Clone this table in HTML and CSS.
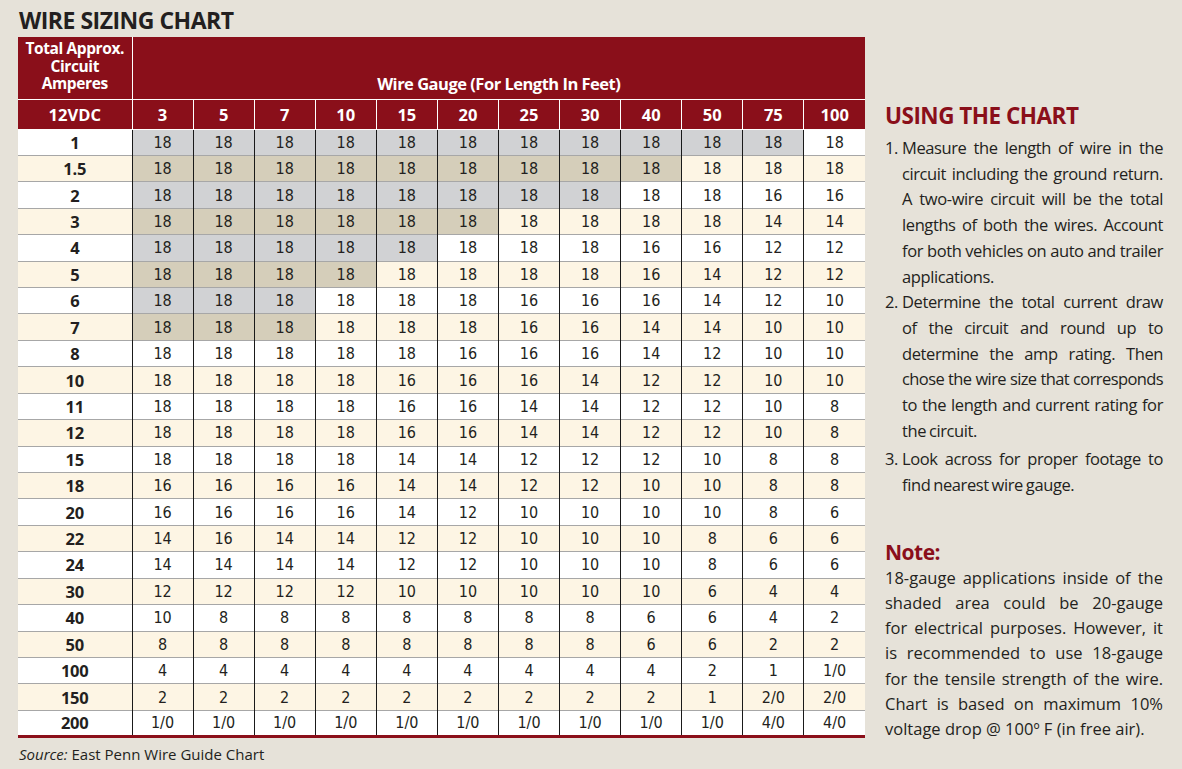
FILE: index.html
```html
<!DOCTYPE html>
<html>
<head>
<meta charset="utf-8">
<link rel="stylesheet" href="styles.css">
</head>
<body>
<div class="page">
  <section class="chart">
    <h1 class="title">WIRE SIZING CHART</h1>
    <table class="grid">
      <colgroup><col class="c0"><col span="12" class="cn"></colgroup>
      <thead>
        <tr class="h1"><th class="amp">Total Approx.<br>Circuit<br>Amperes</th><th colspan="12" class="gauge">Wire Gauge (For Length In Feet)</th></tr>
        <tr class="h2"><th>12VDC</th><th>3</th><th>5</th><th>7</th><th>10</th><th>15</th><th>20</th><th>25</th><th>30</th><th>40</th><th>50</th><th>75</th><th>100</th></tr>
      </thead>
      <tbody>
        <tr><th>1</th><td class="s">18</td><td class="s">18</td><td class="s">18</td><td class="s">18</td><td class="s">18</td><td class="s">18</td><td class="s">18</td><td class="s">18</td><td class="s">18</td><td class="s">18</td><td class="s">18</td><td>18</td></tr>
        <tr><th>1.5</th><td class="s">18</td><td class="s">18</td><td class="s">18</td><td class="s">18</td><td class="s">18</td><td class="s">18</td><td class="s">18</td><td class="s">18</td><td class="s">18</td><td>18</td><td>18</td><td>18</td></tr>
        <tr><th>2</th><td class="s">18</td><td class="s">18</td><td class="s">18</td><td class="s">18</td><td class="s">18</td><td class="s">18</td><td class="s">18</td><td class="s">18</td><td>18</td><td>18</td><td>16</td><td>16</td></tr>
        <tr><th>3</th><td class="s">18</td><td class="s">18</td><td class="s">18</td><td class="s">18</td><td class="s">18</td><td class="s">18</td><td>18</td><td>18</td><td>18</td><td>18</td><td>14</td><td>14</td></tr>
        <tr><th>4</th><td class="s">18</td><td class="s">18</td><td class="s">18</td><td class="s">18</td><td class="s">18</td><td>18</td><td>18</td><td>18</td><td>16</td><td>16</td><td>12</td><td>12</td></tr>
        <tr><th>5</th><td class="s">18</td><td class="s">18</td><td class="s">18</td><td class="s">18</td><td>18</td><td>18</td><td>18</td><td>18</td><td>16</td><td>14</td><td>12</td><td>12</td></tr>
        <tr><th>6</th><td class="s">18</td><td class="s">18</td><td class="s">18</td><td>18</td><td>18</td><td>18</td><td>16</td><td>16</td><td>16</td><td>14</td><td>12</td><td>10</td></tr>
        <tr><th>7</th><td class="s">18</td><td class="s">18</td><td class="s">18</td><td>18</td><td>18</td><td>18</td><td>16</td><td>16</td><td>14</td><td>14</td><td>10</td><td>10</td></tr>
        <tr><th>8</th><td>18</td><td>18</td><td>18</td><td>18</td><td>18</td><td>16</td><td>16</td><td>16</td><td>14</td><td>12</td><td>10</td><td>10</td></tr>
        <tr><th>10</th><td>18</td><td>18</td><td>18</td><td>18</td><td>16</td><td>16</td><td>16</td><td>14</td><td>12</td><td>12</td><td>10</td><td>10</td></tr>
        <tr><th>11</th><td>18</td><td>18</td><td>18</td><td>18</td><td>16</td><td>16</td><td>14</td><td>14</td><td>12</td><td>12</td><td>10</td><td>8</td></tr>
        <tr><th>12</th><td>18</td><td>18</td><td>18</td><td>18</td><td>16</td><td>16</td><td>14</td><td>14</td><td>12</td><td>12</td><td>10</td><td>8</td></tr>
        <tr><th>15</th><td>18</td><td>18</td><td>18</td><td>18</td><td>14</td><td>14</td><td>12</td><td>12</td><td>12</td><td>10</td><td>8</td><td>8</td></tr>
        <tr><th>18</th><td>16</td><td>16</td><td>16</td><td>16</td><td>14</td><td>14</td><td>12</td><td>12</td><td>10</td><td>10</td><td>8</td><td>8</td></tr>
        <tr><th>20</th><td>16</td><td>16</td><td>16</td><td>16</td><td>14</td><td>12</td><td>10</td><td>10</td><td>10</td><td>10</td><td>8</td><td>6</td></tr>
        <tr><th>22</th><td>14</td><td>16</td><td>14</td><td>14</td><td>12</td><td>12</td><td>10</td><td>10</td><td>10</td><td>8</td><td>6</td><td>6</td></tr>
        <tr><th>24</th><td>14</td><td>14</td><td>14</td><td>14</td><td>12</td><td>12</td><td>10</td><td>10</td><td>10</td><td>8</td><td>6</td><td>6</td></tr>
        <tr><th>30</th><td>12</td><td>12</td><td>12</td><td>12</td><td>10</td><td>10</td><td>10</td><td>10</td><td>10</td><td>6</td><td>4</td><td>4</td></tr>
        <tr><th>40</th><td>10</td><td>8</td><td>8</td><td>8</td><td>8</td><td>8</td><td>8</td><td>8</td><td>6</td><td>6</td><td>4</td><td>2</td></tr>
        <tr><th>50</th><td>8</td><td>8</td><td>8</td><td>8</td><td>8</td><td>8</td><td>8</td><td>8</td><td>6</td><td>6</td><td>2</td><td>2</td></tr>
        <tr><th>100</th><td>4</td><td>4</td><td>4</td><td>4</td><td>4</td><td>4</td><td>4</td><td>4</td><td>4</td><td>2</td><td>1</td><td>1/0</td></tr>
        <tr><th>150</th><td>2</td><td>2</td><td>2</td><td>2</td><td>2</td><td>2</td><td>2</td><td>2</td><td>2</td><td>1</td><td>2/0</td><td>2/0</td></tr>
        <tr><th>200</th><td>1/0</td><td>1/0</td><td>1/0</td><td>1/0</td><td>1/0</td><td>1/0</td><td>1/0</td><td>1/0</td><td>1/0</td><td>1/0</td><td>4/0</td><td>4/0</td></tr>
      </tbody>
    </table>
    <p class="source"><em>Source:</em> East Penn Wire Guide Chart</p>
  </section>
  <aside class="side">
    <h2 class="side-title">USING THE CHART</h2>
    <ol class="steps">
      <li><span class="num">1.</span><span class="txt"><span class="ln">Measure the length of wire in the</span><span class="ln">circuit including the ground return.</span><span class="ln">A two-wire circuit will be the total</span><span class="ln">lengths of both the wires. Account</span><span class="ln">for both vehicles on auto and trailer</span><span class="ln end">applications.</span></span></li>
      <li><span class="num">2.</span><span class="txt"><span class="ln">Determine the total current draw</span><span class="ln">of the circuit and round up to</span><span class="ln">determine the amp rating. Then</span><span class="ln tight">chose the wire size that corresponds</span><span class="ln">to the length and current rating for</span><span class="ln end">the circuit.</span></span></li>
      <li><span class="num">3.</span><span class="txt"><span class="ln">Look across for proper footage to</span><span class="ln end">find nearest wire gauge.</span></span></li>
    </ol>
    <h3 class="note-title">Note:</h3>
    <p class="note"><span class="ln">18-gauge applications inside of the</span><span class="ln">shaded area could be 20-gauge</span><span class="ln">for electrical purposes. However, it</span><span class="ln">is recommended to use 18-gauge</span><span class="ln">for the tensile strength of the wire.</span><span class="ln">Chart is based on maximum 10%</span><span class="ln end">voltage drop @ 100º F (in free air).</span></p>
  </aside>
</div>
</body>
</html>
```

FILE: styles.css
```css
* { box-sizing: border-box; }
html, body { margin: 0; padding: 0; }
body {
  background: #e6e2d9;
  font-family: "Open Sans", "Noto Sans", sans-serif;
  font-stretch: normal;
  color: #231f20;
  width: 1182px;
  height: 769px;
  overflow: hidden;
}
.page {
  display: flex;
  padding-left: 18px;
}
.chart { width: 847px; flex: none; }
.title {
  margin: 0;
  height: 37px;
  padding-top: 7px;
  padding-left: 1px;
  font-size: 23px;
  line-height: 26px;
  font-weight: bold;
  letter-spacing: -0.5px;
  color: #231f20;
}
.grid {
  width: 847px;
  border-collapse: collapse;
  table-layout: fixed;
  border-bottom: 3px solid #8b0f1a;
}
.c0 { width: 114px; }
.grid th, .grid td {
  padding: 0;
  text-align: center;
}
.grid thead th {
  background: #8a0f1a;
  color: #fff;
  font-weight: bold;
  border: 1px solid #fff;
  border-top: 0;
}
.grid thead th:first-child { border-left: 0; }
.grid thead th:last-child { border-right: 0; }
.h1 th { height: 62px; }
.h1 .amp { font-size: 15.5px; line-height: 17.5px; letter-spacing: -0.4px; padding-top: 3px; vertical-align: top; }
.h1 .gauge { font-size: 16.5px; letter-spacing: -0.5px; vertical-align: bottom; padding-bottom: 4px; }
.h2 th { height: 30px; font-size: 16.5px; }
.grid tbody tr { height: 26.43px; }
.grid tbody th {
  font-weight: bold;
  font-size: 16.5px;
  letter-spacing: -0.2px;
  border-top: 1px solid #a7a7a7;
  border-right: 1px solid #1a1a1a;
}
.grid tbody td {
  font-family: "DejaVu Sans Condensed", "DejaVu Sans", sans-serif;
  font-size: 16px;
  border-top: 1px solid #a7a7a7;
  border-left: 1px solid #1a1a1a;
}
.grid tbody tr:first-child th, .grid tbody tr:first-child td { border-top: 0; }
.grid tbody tr:nth-child(odd) { background: #ffffff; }
.grid tbody tr:nth-child(even) { background: #fdf5e4; }
.grid tbody tr:nth-child(odd) td.s { background: #d1d2d4; }
.grid tbody tr:nth-child(even) td.s { background: #d5ceba; }
.source {
  margin: 6px 0 0 1px;
  font-size: 15px;
  color: #231f20;
}
.side {
  width: 278px;
  flex: none;
  margin-left: 20px;
  padding-top: 101px;
}
.side-title {
  margin: 0;
  font-size: 22.5px;
  line-height: 30px;
  font-weight: bold;
  color: #8a0f1a;
  letter-spacing: -0.5px;
}
.steps {
  list-style: none;
  margin: 4px 0 0 0;
  padding: 0;
}
.steps li {
  display: flex;
  font-size: 16.5px;
  line-height: 25.7px;
}
.steps .ln { letter-spacing: -0.4px; word-spacing: -1px; }
.steps li:nth-child(2) { margin-bottom: 3px; }
.num { width: 17px; flex: none; letter-spacing: -0.4px; }
.txt { flex: 1; min-width: 0; }
.ln {
  display: block;
  white-space: nowrap;
  text-align: justify;
  text-align-last: justify;
}
.ln.end { text-align-last: left; }
.steps .ln.tight { letter-spacing: -0.6px; word-spacing: -1.5px; }
.note-title {
  margin: 41px 0 0 0;
  font-size: 21px;
  line-height: 26px;
  font-weight: bold;
  letter-spacing: -0.5px;
  color: #8a0f1a;
}
.note {
  margin: 0;
  font-size: 16.5px;
  line-height: 25.2px;
}
```
